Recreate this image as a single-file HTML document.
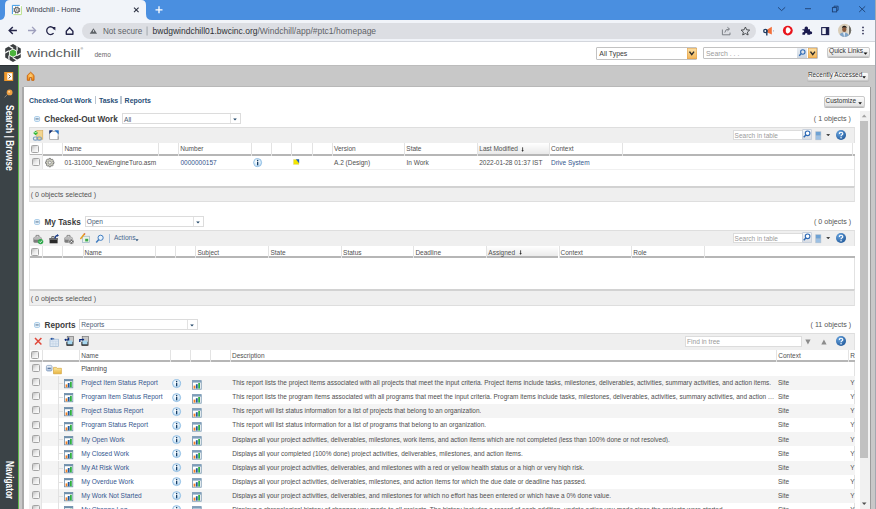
<!DOCTYPE html>
<html><head><meta charset="utf-8">
<style>
*{box-sizing:border-box}
html,body{margin:0;padding:0;width:876px;height:509px;overflow:hidden;background:#fff;font-family:"Liberation Sans",sans-serif;}
.a{position:absolute}
.t{position:absolute;white-space:nowrap;line-height:1}
svg{position:absolute;overflow:visible}
#toolbar{left:0;top:20px;width:876px;height:21px;background:#f1f4f9}
#tbline{left:0;top:41px;width:876px;height:1px;background:#d3d6dc}
#pill{left:82px;top:23px;width:674px;height:16px;background:#dcdee3;border-radius:8px}
#hdr{left:0;top:42px;width:876px;height:23px;background:#fff}
#side{left:0;top:65px;width:18px;height:444px;background:#3b4347}
#green{left:18px;top:65px;width:1px;height:444px;background:#5db84a}
#gray{left:19px;top:65px;width:856px;height:444px;background:#c8c8c8}
#rstrip{left:875px;top:0;width:1px;height:509px;background:#a3a8b0}
#panel{left:24px;top:87px;width:846px;height:422px;background:#fff}
.btn{position:absolute;border:1px solid #c9c9c9;border-radius:2px;background:linear-gradient(#fdfdfd,#e2e2e2);box-shadow:0 1px 0 #b9b9b9}
.sel{position:absolute;border:1px solid #c9c9c9;background:#fff}
.tbl{position:absolute;left:29px;width:826px;background:#fff}
</style></head>
<body>
<!-- tab bar -->
<svg width="876" height="20" style="left:0;top:0">
<rect x="0" y="0" width="876" height="20" fill="#4a8fe0"/>
<path d="M-1,20 Q5,20 5,14 L5,5 Q5,0 10,0 L141,0 Q146,0 146,5 L146,14 Q146,20 152,20 Z" fill="#f1f4f9"/>
<!-- favicon -->
<rect x="12" y="5" width="9.8" height="10" fill="#fff"/>
<path d="M12.4,14.2 L12.4,5.4 L19.8,5.4" stroke="#3d9be6" stroke-width="1" fill="none"/>
<path d="M13.4,14.6 L21.4,14.6 L21.4,6.2" stroke="#b8e08a" stroke-width="1" fill="none"/>
<path d="M19.49,10.25 L20.31,10.80 L19.84,11.92 L18.88,11.72 L18.52,12.08 L18.72,13.04 L17.60,13.51 L17.05,12.69 L16.55,12.69 L16.00,13.51 L14.88,13.04 L15.08,12.08 L14.72,11.72 L13.76,11.92 L13.29,10.80 L14.11,10.25 L14.11,9.75 L13.29,9.20 L13.76,8.08 L14.72,8.28 L15.08,7.92 L14.88,6.96 L16.00,6.49 L16.55,7.31 L17.05,7.31 L17.60,6.49 L18.72,6.96 L18.52,7.92 L18.88,8.28 L19.84,8.08 L20.31,9.20 L19.49,9.75 Z" fill="#6b6b6b"/>
<circle cx="16.8" cy="10.0" r="1.7" fill="#fff"/>
<circle cx="16.8" cy="10.0" r="0.8" fill="#555"/>
<!-- close x -->
<path d="M134,7.6 L138.6,12.2 M138.6,7.6 L134,12.2" stroke="#2d3142" stroke-width="1.1"/>
<!-- plus -->
<path d="M159,6.3 L159,13.3 M155.5,9.8 L162.5,9.8" stroke="#fff" stroke-width="1.3"/>
<!-- window controls -->
<path d="M778,7.3 L781.6,10.6 L785.2,7.3" stroke="#1d3f72" stroke-width="0.9" fill="none"/>
<path d="M805,8.7 L811,8.7" stroke="#1d3f72" stroke-width="0.9"/>
<rect x="832.4" y="7.6" width="4.3" height="4.3" fill="none" stroke="#1d3f72" stroke-width="0.9"/>
<path d="M834,7.6 L834,6.2 L838.1,6.2 L838.1,10.3 L836.7,10.3" fill="none" stroke="#1d3f72" stroke-width="0.9"/>
<path d="M859.2,6.3 L865.2,12 M865.2,6.3 L859.2,12" stroke="#1d3f72" stroke-width="0.9"/>
</svg>
<div class="t" style="left:26px;top:5.6px;font-size:8px;color:#333847;transform-origin:0 0;transform:scaleX(0.9)">Windchill - Home</div>
<div class="a" id="toolbar"></div>
<div class="a" id="tbline"></div>
<div class="a" id="pill"></div>
<svg width="876" height="22" style="left:0;top:20px">
<!-- back -->
<path d="M9.4,10.5 L16.9,10.5 M12.8,6.9 L9.2,10.5 L12.8,14.1" stroke="#25264a" stroke-width="1.45" fill="none"/>
<path d="M28,10.5 L35.5,10.5 M32.1,6.9 L35.6,10.5 L32.1,14.1" stroke="#9e9fbd" stroke-width="1.3" fill="none"/>
<!-- reload -->
<path d="M54.3,9.4 A3.9,3.9 0 1 0 53.6,13.2" stroke="#25264a" stroke-width="1.3" fill="none"/>
<path d="M51.6,6.9 L55.4,6.9 L55.4,10.4 Z" fill="#25264a"/>
<!-- home -->
<path d="M66.3,11.3 L69.6,7.6 L72.9,11.3 L72.9,14.2 L66.3,14.2 Z" stroke="#25264a" stroke-width="1.4" fill="none" stroke-linejoin="round"/>
<!-- warning -->
<path d="M93.4,8.2 L97.1,13.8 L89.7,13.8 Z" fill="#5f6368"/>
<rect x="93" y="10" width="0.8" height="2" fill="#dcdee3"/>
<!-- separator -->
<rect x="146.6" y="6.5" width="0.9" height="9" fill="#9aa0a6"/>
<!-- share -->
<path d="M722.4,9.5 L722.4,14.8 L730,14.8 L730,12.6" stroke="#70757a" stroke-width="0.9" fill="none"/>
<path d="M724.8,12.6 Q725.2,9 729,9 M727.4,7.3 L729.6,9 L727.4,10.9" stroke="#70757a" stroke-width="0.9" fill="none"/>
<!-- star -->
<path d="M745.4,7 L746.7,9.8 L749.7,10.1 L747.4,12.1 L748.1,15 L745.4,13.5 L742.7,15 L743.4,12.1 L741.1,10.1 L744.1,9.8 Z" stroke="#3c4043" stroke-width="0.9" fill="none" stroke-linejoin="round"/>
<!-- megaphone -->
<path d="M767.3,9.4 L771.8,6.8 L771.8,14.6 L767.3,12.6 Z" fill="#f26f3a"/>
<circle cx="765.4" cy="11" r="1.7" fill="none" stroke="#1f3a5f" stroke-width="1.3"/>
<path d="M766.8,10 L766.8,15.4" stroke="#1f3a5f" stroke-width="1.4"/>
<rect x="773" y="10.4" width="1" height="1" fill="#9aa6b2"/>
<!-- red circle -->
<circle cx="787.8" cy="10.6" r="4.9" fill="#e8141c"/>
<path d="M785.8,9.2 Q785.8,8.3 786.5,8.3 L786.6,7.6 Q787.6,7 788.5,7.6 L789.2,7.8 Q790,8 789.9,9 L790.6,9.6 Q791,10.4 790.3,11.2 L789.5,12.6 Q788.4,13.8 787,13.2 Q785.8,12.6 785.8,11.4 Z" fill="#fff"/>
<!-- puzzle -->
<path d="M802.4,9.2 L804.6,9.2 Q804.3,6.6 806.3,6.6 Q808.3,6.6 808,9.2 L810,9.2 L810,11.2 Q812.2,10.9 812.2,12.7 Q812.2,14.5 810,14.2 L810,14.8 L807.4,14.8 Q807.7,13 806.2,13 Q804.7,13 805,14.8 L802.4,14.8 L802.4,12.4 Q804.2,12.6 804.2,11.3 Q804.2,10 802.4,10.3 Z" fill="#1a1a4e"/>
<!-- sidebar icon -->
<rect x="821.7" y="7.6" width="7" height="7" fill="none" stroke="#1c1f4d" stroke-width="1.1"/>
<rect x="825.8" y="7.6" width="2.9" height="7" fill="#1c1f4d"/>
<!-- avatar -->
<defs><clipPath id="av"><circle cx="844.6" cy="10.3" r="6.6"/></clipPath></defs>
<g clip-path="url(#av)">
<rect x="837" y="3" width="15" height="15" fill="#d9cdb8"/>
<rect x="848.5" y="3" width="4" height="15" fill="#6f6f6a"/>
<rect x="847.6" y="3" width="1.3" height="15" fill="#ece6dc"/>
<path d="M838.5,17.5 Q839,12.6 843.8,12.4 Q848.8,12.6 850.6,17.5 Z" fill="#7ea3c8"/>
<path d="M843,12.6 L844.4,17.5 L845.2,12.6 Z" fill="#e6eef6"/>
<ellipse cx="844.3" cy="9.4" rx="2.1" ry="2.6" fill="#8a5a3c"/>
<path d="M842,8.6 Q842,5.6 844.4,5.8 Q846.8,5.8 846.6,8.4 Q845.6,7 844.2,7.2 Q842.8,7.2 842,8.6 Z" fill="#1e1a18"/>
</g>
<!-- kebab -->
<circle cx="863" cy="7.4" r="0.85" fill="#25264a"/>
<circle cx="863" cy="10.5" r="0.85" fill="#25264a"/>
<circle cx="863" cy="13.6" r="0.85" fill="#25264a"/>
</svg>
<div class="t" style="left:102.9px;top:27px;font-size:9px;color:#5f6368;transform-origin:0 0;transform:scaleX(0.9)">Not secure</div>
<div class="t" style="left:152.6px;top:27.1px;font-size:8.5px;color:#303236">bwdgwindchill01.bwcinc.org<span style="color:#5f6368">/Windchill/app/#ptc1/homepage</span></div>

<!-- windchill header -->
<div class="a" id="hdr"></div>
<svg width="26" height="24" style="left:0;top:42px" viewBox="0 42 26 24">
<defs><clipPath id="lc"><path d="M13.00,44.10 L20.79,48.60 L20.79,57.60 L13.00,62.10 L5.21,57.60 L5.21,48.60 Z"/></clipPath></defs>
<path d="M13.00,44.10 L20.79,48.60 L20.79,57.60 L13.00,62.10 L5.21,57.60 L5.21,48.60 Z" fill="#3b3f41"/>
<g clip-path="url(#lc)"><path d="M17.07,50.75 L17.07,40.75 M17.07,55.45 L25.73,50.45 M13.00,57.80 L21.66,62.80 M8.93,55.45 L8.93,65.45 M8.93,50.75 L0.27,55.75 M13.00,48.40 L4.34,43.40" stroke="#fff" stroke-width="1.25"/></g>
<path d="M13.00,48.40 L17.07,50.75 L17.07,55.45 L13.00,57.80 L8.93,55.45 L8.93,50.75 Z" fill="#fff"/>
<path d="M13.00,49.40 L16.20,51.25 L16.20,54.95 L13.00,56.80 L9.80,54.95 L9.80,51.25 Z" fill="#4cb33d"/>
</svg>
<div class="t" style="left:27px;top:48.3px;font-size:11.8px;color:#575b5d;transform-origin:0 0;transform:scaleX(1.19)">windchill</div>
<div class="t" style="left:80.6px;top:48px;font-size:3.5px;color:#555">&#174;</div>
<div class="t" style="left:94.5px;top:52px;font-size:6.5px;color:#666">demo</div>
<div class="sel" style="left:596px;top:47px;width:101px;height:12.5px;border-color:#c2c2c2;border-radius:1px"></div>
<div class="t" style="left:599.3px;top:50.8px;font-size:6.95px;color:#3a3a3a">All Types</div>
<div class="a" style="left:687px;top:48px;width:9.5px;height:10.5px;background:linear-gradient(#fbe2a8,#f3b454);box-shadow:inset 0 0 0 0.5px #e0a050"></div>
<svg width="10" height="10" style="left:687px;top:48px"><path d="M2.5,3.6 L4.75,6.6 L7,3.6" stroke="#2a2a2a" stroke-width="1.4" fill="none"/></svg>
<div class="sel" style="left:703px;top:47px;width:114.5px;height:12.3px;border-color:#c2c2c2;border-radius:1px"></div>
<div class="t" style="left:706px;top:50.8px;font-size:6.9px;color:#9b9b9b">Search . . .</div>
<div class="a" style="left:797.4px;top:48px;width:10px;height:10.3px;background:linear-gradient(#e9eef4,#cdd6e0)"></div>
<svg width="10" height="10" style="left:797.4px;top:48px"><circle cx="5.8" cy="4" r="2.2" fill="none" stroke="#2f6ab5" stroke-width="1.1"/><path d="M4.2,5.6 L2.2,7.8" stroke="#2f6ab5" stroke-width="1.4"/></svg>
<div class="a" style="left:807.5px;top:48px;width:9.5px;height:10.3px;background:linear-gradient(#fbe2a8,#f3b454);box-shadow:inset 0 0 0 0.5px #e0a050"></div>
<svg width="10" height="10" style="left:807.5px;top:48px"><path d="M2.5,3.6 L4.75,6.6 L7,3.6" stroke="#2a2a2a" stroke-width="1.4" fill="none"/></svg>
<div class="btn" style="left:827px;top:47px;width:43px;height:10px"></div>
<div class="t" style="left:829px;top:48.4px;font-size:6.6px;color:#333">Quick Links</div>
<svg width="6" height="4" style="left:862.6px;top:52px"><path d="M0.5,0.5 L4.5,0.5 L2.5,2.8 Z" fill="#111"/></svg>


<div class="a" id="gray"></div>
<div class="a" id="side"></div>
<div class="a" style="left:0;top:65px;width:18px;height:1px;background:#2c3235"></div>
<div class="a" style="left:19px;top:65px;width:856px;height:1px;background:#bcbcbc"></div>
<div class="a" style="left:24px;top:86px;width:846px;height:1px;background:#b8b8b8"></div>
<div class="a" id="green"></div>
<div class="a" style="left:22px;top:87px;width:2px;height:422px;background:#a9a9a9"></div>
<div class="a" id="panel"></div>
<div class="a" style="left:870px;top:87px;width:1px;height:422px;background:#9c9c9c"></div>
<div class="a" id="rstrip"></div>


<svg width="18" height="40" style="left:0;top:65px">
<rect x="4.2" y="7" width="9" height="9" fill="#f19a2c"/>
<rect x="7.3" y="8.2" width="4.9" height="6.6" fill="#fff"/>
<path d="M8.6,9.6 L10.6,11.5 L8.6,13.4" stroke="#7a4a10" stroke-width="0.9" fill="none"/>
<circle cx="9.6" cy="27.4" r="2.9" fill="#f0a040"/>
<circle cx="9.1" cy="26.8" r="1" fill="#ffd7a0"/>
<path d="M7.4,29.4 L4.6,32.4" stroke="#9a8a7a" stroke-width="0.9"/>
</svg>
<div class="t" style="left:14px;top:104.9px;font-size:10px;font-weight:bold;color:#fff;transform-origin:0 0;transform:rotate(90deg) scaleX(0.845)">Search | Browse</div>
<div class="t" style="left:14px;top:460.9px;font-size:10px;font-weight:bold;color:#fff;transform-origin:0 0;transform:rotate(90deg) scaleX(0.83)">Navigator</div>


<svg width="12" height="12" style="left:25px;top:70px">
<defs><radialGradient id="hm" cx="0.5" cy="0.45" r="0.6"><stop offset="0" stop-color="#ffd27a"/><stop offset="1" stop-color="#f08a10"/></radialGradient></defs>
<path d="M2.3,5.4 L5.65,2.2 L9,5.4 L9,10.3 L6.7,10.3 L6.7,7.6 L4.6,7.6 L4.6,10.3 L2.3,10.3 Z" fill="url(#hm)" stroke="#c8620a" stroke-width="0.9" stroke-linejoin="round"/>
</svg>
<div class="btn" style="left:806.5px;top:71.5px;width:62.5px;height:9.5px"></div>
<div class="t" style="left:807.9px;top:72px;font-size:6.45px;color:#333">Recently Accessed</div>
<svg width="6" height="4" style="left:862px;top:75.8px"><path d="M0.3,0.3 L3.9,0.3 L2.1,2.4 Z" fill="#111"/></svg>
<div class="t" style="left:29px;top:96.5px;font-size:6.98px;font-weight:bold;color:#2a4f78">Checked-Out Work</div>
<div class="a" style="left:94.6px;top:96px;width:1.6px;height:7.6px;background:#bac5d1"></div>
<div class="t" style="left:99px;top:96.5px;font-size:6.98px;font-weight:bold;color:#2a4f78">Tasks</div>
<div class="a" style="left:120.2px;top:96px;width:1.6px;height:7.6px;background:#bac5d1"></div>
<div class="t" style="left:124.6px;top:96.5px;font-size:6.98px;font-weight:bold;color:#2a4f78">Reports</div>
<div class="btn" style="left:824px;top:96px;width:41px;height:10.5px"></div>
<div class="t" style="left:825.6px;top:97.6px;font-size:6.45px;color:#333">Customize</div>
<svg width="6" height="4" style="left:858.2px;top:101.5px"><path d="M0.3,0.3 L3.9,0.3 L2.1,2.4 Z" fill="#111"/></svg>


<div class="a" style="left:860px;top:111px;width:10px;height:398px;background:#f1f1f1"></div>
<div class="a" style="left:860px;top:121px;width:8px;height:336.6px;background:#c1c1c1"></div>
<svg width="10" height="10" style="left:860px;top:111px"><path d="M1.8,6.2 L4.2,3.6 L6.6,6.2 Z" fill="#a3a3a3"/></svg>
<svg width="10" height="10" style="left:860px;top:499px"><path d="M1.9,3.4 L4.2,5.9 L6.5,3.4 Z" fill="#505050"/></svg>

<svg width="8" height="8" style="left:33.6px;top:116.4px"><rect x="0.6" y="0.6" width="5" height="4.8" rx="1.1" fill="#e9f3fb" stroke="#9cc4e4" stroke-width="0.9"/><rect x="1.5" y="2.5" width="3.2" height="0.9" fill="#3f5f80"/></svg>
<div class="t" style="left:44.3px;top:115.6px;font-size:8.2px;font-weight:bold;color:#3c3c3c">Checked-Out Work</div>
<div class="sel" style="left:122px;top:113.3px;width:119.4px;height:11.2px;border-color:#dcdcdc"></div>
<div class="a" style="left:230.2px;top:114.3px;width:1px;height:9.2px;background:#e2e2e2"></div>
<svg width="6" height="4" style="left:233.0px;top:118.0px"><path d="M0.2,0.4 L3.8,0.4 L2,2.5 Z" fill="#1f4466"/></svg>
<div class="t" style="left:124px;top:116.5px;font-size:6.6px;color:#4a5a74">All</div>
<div class="t" style="left:813.8px;top:116.2px;font-size:7.1px;color:#555">( 1 objects )</div>
<div class="a" style="left:29px;top:127px;width:826px;height:15.699999999999989px;background:#efefef;border-top:1px solid #dedede;border-left:1px solid #e2e2e2;border-right:1px solid #e2e2e2"></div>
<div class="a" style="left:29px;top:142.7px;width:826px;height:43.400000000000006px;background:#fff;border-left:1px solid #e2e2e2;border-right:1px solid #e2e2e2"></div>
<div class="a" style="left:29px;top:186.1px;width:826px;height:15.900000000000006px;background:#efefef;border-top:2px solid #d2d2d2;border-bottom:1px solid #dedede;border-left:1px solid #e2e2e2;border-right:1px solid #e2e2e2"></div>
<div class="t" style="left:30.7px;top:192.4px;font-size:7.1px;color:#555">( 0 objects selected )</div>
<div class="sel" style="left:732.6px;top:129.7px;width:79px;height:10.7px;border-color:#dcdcdc"></div>
<div class="t" style="left:734.6px;top:132.7px;font-size:6.5px;color:#9a9a9a">Search in table</div>
<div class="a" style="left:801.8px;top:129.1px;width:9.8px;height:11.3px;background:linear-gradient(#f4f6f9,#d9dde3);border:1px solid #c9d1dd;border-radius:1px"></div>
<svg width="10" height="11" style="left:801.8px;top:129.1px"><circle cx="5.6" cy="4.3" r="2.3" fill="#fff" stroke="#2f6ab5" stroke-width="1.1"/><path d="M3.9,6 L1.7,8.3" stroke="#2f6ab5" stroke-width="1.4"/></svg>
<svg width="8" height="11" style="left:814.6px;top:130.7px"><rect x="0.3" y="0.3" width="5.9" height="8.8" fill="#b8c4d0"/><rect x="0.9" y="0.9" width="4.7" height="3.6" fill="#6ea2d4"/><rect x="0.9" y="5.1" width="4.7" height="3.4" fill="#9cc0e4"/></svg>
<svg width="6" height="4" style="left:825.8px;top:134.29999999999998px"><path d="M0.2,0.3 L4.2,0.3 L2.2,2 Z" fill="#111"/></svg>
<svg width="11" height="11" style="left:835.8px;top:130.39999999999998px"><defs><radialGradient id="hg" cx="0.35" cy="0.3" r="0.8"><stop offset="0" stop-color="#6aa6e0"/><stop offset="1" stop-color="#1d5597"/></radialGradient></defs><circle cx="5" cy="5" r="5" fill="url(#hg)"/><path d="M3.3,3.9 Q3.3,2.2 5,2.2 Q6.8,2.2 6.8,3.7 Q6.8,4.6 5.7,5.1 Q5.05,5.4 5.05,6.3" stroke="#fff" stroke-width="1.15" fill="none"/><circle cx="5.05" cy="7.7" r="0.7" fill="#fff"/></svg>
<svg width="12" height="12" style="left:33px;top:129.5px">
<rect x="3.8" y="0.6" width="6" height="8.6" fill="#f3d58e" stroke="#d1a652" stroke-width="0.6"/>
<path d="M2.6,0.7 L5,3 L2.6,5.3 L0.2,3 Z" fill="#2eb82e"/>
<path d="M1.5,2.6 L3.7,2.6" stroke="#fff" stroke-width="0.7"/>
<rect x="0.4" y="7" width="4.2" height="3.2" rx="1.6" fill="none" stroke="#7e9fc0" stroke-width="1.2"/>
<rect x="4.2" y="7" width="4.2" height="3.2" rx="1.6" fill="none" stroke="#7e9fc0" stroke-width="1.2"/>
</svg>
<svg width="12" height="12" style="left:48.5px;top:129.8px">
<rect x="0.7" y="1.6" width="8.4" height="8" fill="#fff" stroke="#9a9a9a" stroke-width="0.7"/>
<path d="M0.3,0.3 L4,0.3 L0.3,4 Z" fill="#0f2a6e"/>
<path d="M9.7,0.2 L5.4,0.2 L9.7,4.6 Z" fill="#2a72c4"/>
<path d="M9.2,9.6 L9.2,6.4" stroke="#777" stroke-width="0.6"/>
</svg>
<div class="a" style="left:29px;top:142.7px;width:826px;height:13.2px;background:#fff"></div>
<div class="a" style="left:29.4px;top:142.7px;width:1px;height:13.2px;background:#e3e3e3"></div>
<div class="a" style="left:30.4px;top:153.89999999999998px;width:12.0px;height:2px;background:#b6b6b6"></div>
<div class="a" style="left:42.4px;top:142.7px;width:1px;height:13.2px;background:#e3e3e3"></div>
<div class="a" style="left:43.4px;top:153.89999999999998px;width:19.0px;height:2px;background:#b6b6b6"></div>
<div class="a" style="left:62.4px;top:142.7px;width:1px;height:13.2px;background:#e3e3e3"></div>
<div class="a" style="left:63.4px;top:153.89999999999998px;width:94.9px;height:2px;background:#b6b6b6"></div>
<div class="t" style="left:64.4px;top:146.29999999999998px;font-size:6.5px;color:#505050">Name</div>
<div class="a" style="left:158.3px;top:142.7px;width:1px;height:13.2px;background:#e3e3e3"></div>
<div class="a" style="left:159.3px;top:153.89999999999998px;width:19.0px;height:2px;background:#b6b6b6"></div>
<div class="a" style="left:178.3px;top:142.7px;width:1px;height:13.2px;background:#e3e3e3"></div>
<div class="a" style="left:179.3px;top:153.89999999999998px;width:71.69999999999999px;height:2px;background:#b6b6b6"></div>
<div class="t" style="left:180.3px;top:146.29999999999998px;font-size:6.5px;color:#505050">Number</div>
<div class="a" style="left:251px;top:142.7px;width:1px;height:13.2px;background:#e3e3e3"></div>
<div class="a" style="left:252px;top:153.89999999999998px;width:19px;height:2px;background:#b6b6b6"></div>
<div class="a" style="left:271px;top:142.7px;width:1px;height:13.2px;background:#e3e3e3"></div>
<div class="a" style="left:272px;top:153.89999999999998px;width:19px;height:2px;background:#b6b6b6"></div>
<div class="a" style="left:291px;top:142.7px;width:1px;height:13.2px;background:#e3e3e3"></div>
<div class="a" style="left:292px;top:153.89999999999998px;width:19.600000000000023px;height:2px;background:#b6b6b6"></div>
<div class="a" style="left:311.6px;top:142.7px;width:1px;height:13.2px;background:#e3e3e3"></div>
<div class="a" style="left:312.6px;top:153.89999999999998px;width:19.399999999999977px;height:2px;background:#b6b6b6"></div>
<div class="a" style="left:332px;top:142.7px;width:1px;height:13.2px;background:#e3e3e3"></div>
<div class="a" style="left:333px;top:153.89999999999998px;width:71.30000000000001px;height:2px;background:#b6b6b6"></div>
<div class="t" style="left:334px;top:146.29999999999998px;font-size:6.5px;color:#505050">Version</div>
<div class="a" style="left:404.3px;top:142.7px;width:1px;height:13.2px;background:#e3e3e3"></div>
<div class="a" style="left:405.3px;top:153.89999999999998px;width:72.0px;height:2px;background:#b6b6b6"></div>
<div class="t" style="left:406.3px;top:146.29999999999998px;font-size:6.5px;color:#505050">State</div>
<div class="a" style="left:478.3px;top:142.7px;width:70.80000000000001px;height:11.7px;background:linear-gradient(#fff,#e9e9e9)"></div>
<div class="a" style="left:477.3px;top:142.7px;width:1px;height:13.2px;background:#e3e3e3"></div>
<div class="a" style="left:478.3px;top:153.89999999999998px;width:70.80000000000001px;height:2px;background:#b6b6b6"></div>
<div class="t" style="left:479.3px;top:146.29999999999998px;font-size:6.5px;color:#505050">Last Modified</div>
<div class="a" style="left:549.1px;top:142.7px;width:1px;height:13.2px;background:#e3e3e3"></div>
<div class="a" style="left:550.1px;top:153.89999999999998px;width:71.89999999999998px;height:2px;background:#b6b6b6"></div>
<div class="t" style="left:551.1px;top:146.29999999999998px;font-size:6.5px;color:#505050">Context</div>
<div class="a" style="left:622px;top:142.7px;width:1px;height:13.2px;background:#e3e3e3"></div>
<div class="a" style="left:623px;top:153.89999999999998px;width:229.29999999999995px;height:2px;background:#b6b6b6"></div>
<div class="a" style="left:852.3px;top:142.7px;width:1px;height:13.2px;background:#e3e3e3"></div>
<div class="a" style="left:853.3px;top:153.89999999999998px;width:1.3000000000000682px;height:2px;background:#b6b6b6"></div>
<svg width="4" height="6" style="left:521.4px;top:146.8px"><path d="M1.6,0.3 L1.6,4" stroke="#222" stroke-width="0.8"/><path d="M0.4,3.2 L2.8,3.2 L1.6,4.8 Z" fill="#222"/></svg>
<div class="a" style="left:31.3px;top:144.6px;width:8px;height:8px;border:1px solid #a4a4a4;border-radius:1.5px;background:linear-gradient(135deg,#bdbdbd 0%,#e9e9e9 45%,#fff 100%)"></div>
<div class="a" style="left:29.4px;top:155.3px;width:13px;height:13.5px;background:#f4f4f4"></div>
<div class="a" style="left:42.4px;top:155.3px;width:1px;height:13.5px;background:#e6e6e6"></div>
<div class="a" style="left:29.4px;top:168.8px;width:825px;height:1px;background:#f0f0f0"></div>
<div class="a" style="left:32.1px;top:158px;width:8px;height:8px;border:1px solid #a4a4a4;border-radius:1.5px;background:linear-gradient(135deg,#bdbdbd 0%,#e9e9e9 45%,#fff 100%)"></div>
<svg width="10" height="10" style="left:44.6px;top:158px">
<path d="M7.83,3.56 L9.01,3.75 L9.01,5.45 L7.83,5.64 L7.67,6.01 L8.38,6.98 L7.18,8.18 L6.21,7.47 L5.84,7.63 L5.65,8.81 L3.95,8.81 L3.76,7.63 L3.39,7.47 L2.42,8.18 L1.22,6.98 L1.93,6.01 L1.77,5.64 L0.59,5.45 L0.59,3.75 L1.77,3.56 L1.93,3.19 L1.22,2.22 L2.42,1.02 L3.39,1.73 L3.76,1.57 L3.95,0.39 L5.65,0.39 L5.84,1.57 L6.21,1.73 L7.18,1.02 L8.38,2.22 L7.67,3.19 Z" fill="#d2d2c4" stroke="#5e5e5e" stroke-width="0.7" stroke-linejoin="round"/>
<circle cx="4.8" cy="4.6" r="1.5" fill="#f4f4f0" stroke="#6a6a6a" stroke-width="0.6"/>
</svg>
<div class="t" style="left:64.6px;top:159.7px;font-size:6.5px;color:#4e4e4e">01-31000_NewEngineTuro.asm</div>
<div class="t" style="left:180.5px;top:159.7px;font-size:6.5px;color:#34568e">0000000157</div>
<svg width="10" height="10" style="left:253px;top:157.8px"><defs><radialGradient id="ig" cx="0.4" cy="0.35" r="0.7"><stop offset="0" stop-color="#ffffff"/><stop offset="1" stop-color="#bcdcf4"/></radialGradient></defs><circle cx="4.6" cy="4.6" r="4" fill="url(#ig)" stroke="#7fb4e0" stroke-width="0.8"/><rect x="4" y="3.8" width="1.3" height="3.5" fill="#173e66"/><circle cx="4.65" cy="2.6" r="0.75" fill="#173e66"/></svg>
<svg width="8" height="8" style="left:293px;top:158.8px"><rect x="0.3" y="0.3" width="5.7" height="5.3" fill="#f2e400" stroke="#d8d8e8" stroke-width="0.3"/><path d="M2.8,0.2 L6.1,0.2 L6.1,4.2 Z" fill="#2064c0"/></svg>
<div class="t" style="left:334px;top:159.7px;font-size:6.5px;color:#4e4e4e">A.2 (Design)</div>
<div class="t" style="left:406.5px;top:159.7px;font-size:6.5px;color:#4e4e4e">In Work</div>
<div class="t" style="left:479.2px;top:159.7px;font-size:6.5px;color:#4e4e4e">2022-01-28 01:37 IST</div>
<div class="t" style="left:551px;top:159.7px;font-size:6.5px;color:#34568e">Drive System</div>
<svg width="8" height="8" style="left:33.6px;top:219.4px"><rect x="0.6" y="0.6" width="5" height="4.8" rx="1.1" fill="#e9f3fb" stroke="#9cc4e4" stroke-width="0.9"/><rect x="1.5" y="2.5" width="3.2" height="0.9" fill="#3f5f80"/></svg>
<div class="t" style="left:44.5px;top:218.6px;font-size:8.2px;font-weight:bold;color:#3c3c3c">My Tasks</div>
<div class="sel" style="left:84.8px;top:216.2px;width:119.3px;height:11.2px;border-color:#dcdcdc"></div>
<div class="a" style="left:193px;top:217.2px;width:1px;height:9.2px;background:#e2e2e2"></div>
<svg width="6" height="4" style="left:195.8px;top:220.89999999999998px"><path d="M0.2,0.4 L3.8,0.4 L2,2.5 Z" fill="#1f4466"/></svg>
<div class="t" style="left:86.8px;top:219.39999999999998px;font-size:6.6px;color:#4a5a74">Open</div>
<div class="t" style="left:814px;top:219.2px;font-size:7.1px;color:#555">( 0 objects )</div>
<div class="a" style="left:29px;top:230.2px;width:826px;height:16.0px;background:#efefef;border-top:1px solid #dedede;border-left:1px solid #e2e2e2;border-right:1px solid #e2e2e2"></div>
<div class="a" style="left:29px;top:246.2px;width:826px;height:43.0px;background:#fff;border-left:1px solid #e2e2e2;border-right:1px solid #e2e2e2"></div>
<div class="a" style="left:29px;top:289.2px;width:826px;height:16.400000000000034px;background:#efefef;border-top:2px solid #d2d2d2;border-bottom:1px solid #dedede;border-left:1px solid #e2e2e2;border-right:1px solid #e2e2e2"></div>
<div class="t" style="left:30.7px;top:295.5px;font-size:7.1px;color:#555">( 0 objects selected )</div>
<div class="sel" style="left:732.6px;top:232.7px;width:79px;height:10.7px;border-color:#dcdcdc"></div>
<div class="t" style="left:734.6px;top:235.7px;font-size:6.5px;color:#9a9a9a">Search in table</div>
<div class="a" style="left:801.8px;top:232.1px;width:9.8px;height:11.3px;background:linear-gradient(#f4f6f9,#d9dde3);border:1px solid #c9d1dd;border-radius:1px"></div>
<svg width="10" height="11" style="left:801.8px;top:232.1px"><circle cx="5.6" cy="4.3" r="2.3" fill="#fff" stroke="#2f6ab5" stroke-width="1.1"/><path d="M3.9,6 L1.7,8.3" stroke="#2f6ab5" stroke-width="1.4"/></svg>
<svg width="8" height="11" style="left:814.6px;top:233.7px"><rect x="0.3" y="0.3" width="5.9" height="8.8" fill="#b8c4d0"/><rect x="0.9" y="0.9" width="4.7" height="3.6" fill="#6ea2d4"/><rect x="0.9" y="5.1" width="4.7" height="3.4" fill="#9cc0e4"/></svg>
<svg width="6" height="4" style="left:825.8px;top:237.29999999999998px"><path d="M0.2,0.3 L4.2,0.3 L2.2,2 Z" fill="#111"/></svg>
<svg width="11" height="11" style="left:835.8px;top:233.39999999999998px"><defs><radialGradient id="hg" cx="0.35" cy="0.3" r="0.8"><stop offset="0" stop-color="#6aa6e0"/><stop offset="1" stop-color="#1d5597"/></radialGradient></defs><circle cx="5" cy="5" r="5" fill="url(#hg)"/><path d="M3.3,3.9 Q3.3,2.2 5,2.2 Q6.8,2.2 6.8,3.7 Q6.8,4.6 5.7,5.1 Q5.05,5.4 5.05,6.3" stroke="#fff" stroke-width="1.15" fill="none"/><circle cx="5.05" cy="7.7" r="0.7" fill="#fff"/></svg>
<svg width="12" height="12" style="left:32.8px;top:233.5px">
<rect x="0.4" y="2.8" width="8.2" height="6" rx="1.6" fill="#7c7c7c"/>
<rect x="0.8" y="3.1" width="7.4" height="2.6" rx="1.2" fill="#b9b9b9"/>
<path d="M3,3 L3,1.4 L6,1.4 L6,3" stroke="#777" stroke-width="0.8" fill="none"/>
<circle cx="7.6" cy="7.6" r="2.7" fill="#2ea84a"/>
<path d="M6.3,7.6 L7.3,8.6 L9,6.6" stroke="#fff" stroke-width="0.9" fill="none"/>
</svg>
<svg width="12" height="12" style="left:48.6px;top:233.5px">
<path d="M0.6,4 L8.6,4 L8.6,9.3 L0.6,9.3 Z" fill="#2a2a2a"/>
<path d="M0.6,4 L8.6,4 L8.6,6 L0.6,6 Z" fill="#6a6a6a"/>
<path d="M2.8,4 L2.8,2.6 L5.2,2.6 L5.2,4" stroke="#444" stroke-width="0.8" fill="none"/>
<path d="M6,4.6 Q6.2,1.6 8.8,1.4" stroke="#1a3d8a" stroke-width="1.2" fill="none"/>
<path d="M8,0 L10,1.4 L8,2.8 Z" fill="#1a3d8a"/>
</svg>
<svg width="12" height="12" style="left:63.8px;top:233.5px">
<rect x="0.4" y="2.8" width="8.2" height="6" rx="1.6" fill="#7c7c7c"/>
<rect x="0.8" y="3.1" width="7.4" height="2.6" rx="1.2" fill="#b9b9b9"/>
<path d="M3,3 L3,1.4 L6,1.4 L6,3" stroke="#777" stroke-width="0.8" fill="none"/>
<circle cx="7.4" cy="7.6" r="2.6" fill="#6a6a6a" stroke="#fff" stroke-width="0.5"/>
<path d="M6.4,6.6 L8.4,8.6 M8.4,6.6 L6.4,8.6" stroke="#fff" stroke-width="0.8"/>
</svg>
<svg width="12" height="12" style="left:79.5px;top:233.3px">
<rect x="2.6" y="3.2" width="6.8" height="6.4" fill="#e8f3e8" stroke="#8aa8c0" stroke-width="0.6"/>
<rect x="5.2" y="5.8" width="3" height="2.6" fill="#3ca84a"/>
<path d="M0.4,6 L4.6,0.8" stroke="#e6a020" stroke-width="1.4"/>
<path d="M3.6,0.4 L5.4,0.6 L5,1.8 Z" fill="#d03020"/>
</svg>
<svg width="11" height="11" style="left:95px;top:233.6px">
<circle cx="5.6" cy="3.8" r="2.6" fill="#eaf3fb" stroke="#3f7cc0" stroke-width="1"/>
<path d="M3.8,5.6 L1.2,8.4" stroke="#3f7cc0" stroke-width="1.5"/>
</svg>
<div class="a" style="left:109px;top:233.6px;width:0.9px;height:9px;background:#a9c1dc"></div>
<div class="t" style="left:113.9px;top:235.2px;font-size:6.6px;color:#4a6890">Actions</div>
<svg width="6" height="4" style="left:135.2px;top:238.6px"><path d="M0.3,0.3 L3.6,0.3 L1.95,2.2 Z" fill="#2a4f78"/></svg>

<div class="a" style="left:29px;top:246.2px;width:826px;height:12.1px;background:#fff"></div>
<div class="a" style="left:29.4px;top:246.2px;width:1px;height:12.1px;background:#e3e3e3"></div>
<div class="a" style="left:30.4px;top:256.3px;width:11.600000000000001px;height:2px;background:#b6b6b6"></div>
<div class="a" style="left:42px;top:246.2px;width:1px;height:12.1px;background:#e3e3e3"></div>
<div class="a" style="left:43px;top:256.3px;width:19px;height:2px;background:#b6b6b6"></div>
<div class="a" style="left:62px;top:246.2px;width:1px;height:12.1px;background:#e3e3e3"></div>
<div class="a" style="left:63px;top:256.3px;width:19.5px;height:2px;background:#b6b6b6"></div>
<div class="a" style="left:82.5px;top:246.2px;width:1px;height:12.1px;background:#e3e3e3"></div>
<div class="a" style="left:83.5px;top:256.3px;width:71.5px;height:2px;background:#b6b6b6"></div>
<div class="t" style="left:84.5px;top:249.79999999999998px;font-size:6.5px;color:#505050">Name</div>
<div class="a" style="left:155px;top:246.2px;width:1px;height:12.1px;background:#e3e3e3"></div>
<div class="a" style="left:156px;top:256.3px;width:19.400000000000006px;height:2px;background:#b6b6b6"></div>
<div class="a" style="left:175.4px;top:246.2px;width:1px;height:12.1px;background:#e3e3e3"></div>
<div class="a" style="left:176.4px;top:256.3px;width:19.0px;height:2px;background:#b6b6b6"></div>
<div class="a" style="left:195.4px;top:246.2px;width:1px;height:12.1px;background:#e3e3e3"></div>
<div class="a" style="left:196.4px;top:256.3px;width:71.99999999999997px;height:2px;background:#b6b6b6"></div>
<div class="t" style="left:197.4px;top:249.79999999999998px;font-size:6.5px;color:#505050">Subject</div>
<div class="a" style="left:268.4px;top:246.2px;width:1px;height:12.1px;background:#e3e3e3"></div>
<div class="a" style="left:269.4px;top:256.3px;width:71.70000000000005px;height:2px;background:#b6b6b6"></div>
<div class="t" style="left:270.4px;top:249.79999999999998px;font-size:6.5px;color:#505050">State</div>
<div class="a" style="left:341.1px;top:246.2px;width:1px;height:12.1px;background:#e3e3e3"></div>
<div class="a" style="left:342.1px;top:256.3px;width:71.29999999999995px;height:2px;background:#b6b6b6"></div>
<div class="t" style="left:343.1px;top:249.79999999999998px;font-size:6.5px;color:#505050">Status</div>
<div class="a" style="left:413.4px;top:246.2px;width:1px;height:12.1px;background:#e3e3e3"></div>
<div class="a" style="left:414.4px;top:256.3px;width:71.90000000000003px;height:2px;background:#b6b6b6"></div>
<div class="t" style="left:415.4px;top:249.79999999999998px;font-size:6.5px;color:#505050">Deadline</div>
<div class="a" style="left:487.3px;top:246.2px;width:71.19999999999999px;height:10.6px;background:linear-gradient(#fff,#e9e9e9)"></div>
<div class="a" style="left:486.3px;top:246.2px;width:1px;height:12.1px;background:#e3e3e3"></div>
<div class="a" style="left:487.3px;top:256.3px;width:71.19999999999999px;height:2px;background:#b6b6b6"></div>
<div class="t" style="left:488.3px;top:249.79999999999998px;font-size:6.5px;color:#505050">Assigned</div>
<div class="a" style="left:558.5px;top:246.2px;width:1px;height:12.1px;background:#e3e3e3"></div>
<div class="a" style="left:559.5px;top:256.3px;width:71.70000000000005px;height:2px;background:#b6b6b6"></div>
<div class="t" style="left:560.5px;top:249.79999999999998px;font-size:6.5px;color:#505050">Context</div>
<div class="a" style="left:631.2px;top:246.2px;width:1px;height:12.1px;background:#e3e3e3"></div>
<div class="a" style="left:632.2px;top:256.3px;width:71.39999999999998px;height:2px;background:#b6b6b6"></div>
<div class="t" style="left:633.2px;top:249.79999999999998px;font-size:6.5px;color:#505050">Role</div>
<div class="a" style="left:703.6px;top:246.2px;width:1px;height:12.1px;background:#e3e3e3"></div>
<div class="a" style="left:704.6px;top:256.3px;width:150.0px;height:2px;background:#b6b6b6"></div>
<svg width="4" height="6" style="left:518.6px;top:249.6px"><path d="M1.6,0.3 L1.6,4" stroke="#222" stroke-width="0.8"/><path d="M0.4,3.2 L2.8,3.2 L1.6,4.8 Z" fill="#222"/></svg>
<div class="a" style="left:31.2px;top:248.3px;width:8px;height:8px;border:1px solid #a4a4a4;border-radius:1.5px;background:linear-gradient(135deg,#bdbdbd 0%,#e9e9e9 45%,#fff 100%)"></div>
<svg width="8" height="8" style="left:33.6px;top:322.4px"><rect x="0.6" y="0.6" width="5" height="4.8" rx="1.1" fill="#e9f3fb" stroke="#9cc4e4" stroke-width="0.9"/><rect x="1.5" y="2.5" width="3.2" height="0.9" fill="#3f5f80"/></svg>
<div class="t" style="left:44.6px;top:321.6px;font-size:8.2px;font-weight:bold;color:#3c3c3c">Reports</div>
<div class="sel" style="left:79.3px;top:319.2px;width:119.2px;height:11.3px;border-color:#dcdcdc"></div>
<div class="a" style="left:187.3px;top:320.2px;width:1px;height:9.3px;background:#e2e2e2"></div>
<svg width="6" height="4" style="left:190.10000000000002px;top:323.9px"><path d="M0.2,0.4 L3.8,0.4 L2,2.5 Z" fill="#1f4466"/></svg>
<div class="t" style="left:81.3px;top:322.4px;font-size:6.6px;color:#4a5a74">Reports</div>
<div class="t" style="left:810.6px;top:322px;font-size:7.1px;color:#555">( 11 objects )</div>
<div class="a" style="left:29px;top:333.2px;width:826px;height:16.400000000000034px;background:#efefef;border-top:1px solid #dedede;border-left:1px solid #e2e2e2;border-right:1px solid #e2e2e2"></div>
<div class="a" style="left:29px;top:349.6px;width:826px;height:159.39999999999998px;background:#fff;border-left:1px solid #e2e2e2;border-right:1px solid #e2e2e2"></div>
<div class="sel" style="left:684.8px;top:335.6px;width:117.5px;height:11.7px;border-color:#dcdcdc"></div>
<div class="t" style="left:687px;top:339px;font-size:6.6px;color:#9a9a9a">Find in tree</div>
<svg width="7" height="7" style="left:805.4px;top:338.6px"><path d="M0.3,0.6 L5.6,0.6 L2.95,5.4 Z" fill="#8c8c8c"/></svg>
<svg width="7" height="7" style="left:820.6px;top:338.6px"><path d="M0.3,5.4 L5.6,5.4 L2.95,0.6 Z" fill="#8c8c8c"/></svg>
<svg width="11" height="11" style="left:836px;top:336.2px"><defs><radialGradient id="hg" cx="0.35" cy="0.3" r="0.8"><stop offset="0" stop-color="#6aa6e0"/><stop offset="1" stop-color="#1d5597"/></radialGradient></defs><circle cx="5" cy="5" r="5" fill="url(#hg)"/><path d="M3.3,3.9 Q3.3,2.2 5,2.2 Q6.8,2.2 6.8,3.7 Q6.8,4.6 5.7,5.1 Q5.05,5.4 5.05,6.3" stroke="#fff" stroke-width="1.15" fill="none"/><circle cx="5.05" cy="7.7" r="0.7" fill="#fff"/></svg>
<svg width="10" height="10" style="left:33.6px;top:336.8px"><path d="M1,1 L7.4,7.6 M7.4,1 L1,7.6" stroke="#e0483a" stroke-width="1.5"/></svg>
<svg width="11" height="11" style="left:49.2px;top:336.6px">
<rect x="1" y="2.2" width="8.6" height="7.2" fill="#dfe9f4" stroke="#9fb8d2" stroke-width="0.7"/>
<path d="M1,4.2 L9.6,4.2 M4,4.2 L4,9.4 M6.8,4.2 L6.8,9.4 M1,6.8 L9.6,6.8" stroke="#b9cde0" stroke-width="0.5"/>
<path d="M1.2,1.8 L3.2,0.4 L3.2,3.2 Z" fill="#1a4a9a"/>
<path d="M3,1.8 L5.2,1.8" stroke="#1a4a9a" stroke-width="0.9"/>
</svg>
<svg width="11" height="11" style="left:64.4px;top:336.4px">
<rect x="3.2" y="0.6" width="6.4" height="9" fill="#c8c8c8" stroke="#666" stroke-width="0.6"/>
<rect x="2.4" y="5.8" width="6.4" height="3.8" fill="#222"/>
<rect x="3.4" y="4.6" width="5" height="3.8" fill="#a8d8f0"/>
<path d="M4.6,1.6 L4.6,3.8 L1.2,3.8" stroke="#0a2a7a" stroke-width="1.3" fill="none"/>
<path d="M0.2,3.8 L2,2.4 L2,5.2 Z" fill="#0a2a7a"/>
</svg>
<svg width="11" height="11" style="left:79.2px;top:336.4px">
<rect x="3.2" y="0.6" width="6.4" height="9" fill="#c8c8c8" stroke="#666" stroke-width="0.6"/>
<rect x="2.4" y="5.8" width="6.4" height="3.8" fill="#222"/>
<rect x="3.4" y="4.6" width="5" height="3.8" fill="#a8d8f0"/>
<path d="M0.8,6 L0.8,3.6 L4.4,3.6" stroke="#0a2a7a" stroke-width="1.3" fill="none"/>
<path d="M5.4,3.6 L3.6,2.2 L3.6,5 Z" fill="#0a2a7a"/>
</svg>

<div class="a" style="left:29px;top:349.6px;width:826px;height:12.2px;background:#fff"></div>
<div class="a" style="left:29.4px;top:349.6px;width:1px;height:12.2px;background:#e3e3e3"></div>
<div class="a" style="left:30.4px;top:359.8px;width:12.0px;height:2px;background:#b6b6b6"></div>
<div class="a" style="left:42.4px;top:349.6px;width:1px;height:12.2px;background:#e3e3e3"></div>
<div class="a" style="left:43.4px;top:359.8px;width:35.800000000000004px;height:2px;background:#b6b6b6"></div>
<div class="a" style="left:79.2px;top:349.6px;width:1px;height:12.2px;background:#e3e3e3"></div>
<div class="a" style="left:80.2px;top:359.8px;width:89.8px;height:2px;background:#b6b6b6"></div>
<div class="t" style="left:81.2px;top:353.20000000000005px;font-size:6.5px;color:#505050">Name</div>
<div class="a" style="left:170px;top:349.6px;width:1px;height:12.2px;background:#e3e3e3"></div>
<div class="a" style="left:171px;top:359.8px;width:18.599999999999994px;height:2px;background:#b6b6b6"></div>
<div class="a" style="left:189.6px;top:349.6px;width:1px;height:12.2px;background:#e3e3e3"></div>
<div class="a" style="left:190.6px;top:359.8px;width:19.200000000000017px;height:2px;background:#b6b6b6"></div>
<div class="a" style="left:209.8px;top:349.6px;width:1px;height:12.2px;background:#e3e3e3"></div>
<div class="a" style="left:210.8px;top:359.8px;width:19.19999999999999px;height:2px;background:#b6b6b6"></div>
<div class="a" style="left:230px;top:349.6px;width:1px;height:12.2px;background:#e3e3e3"></div>
<div class="a" style="left:231px;top:359.8px;width:545.3px;height:2px;background:#b6b6b6"></div>
<div class="t" style="left:232px;top:353.20000000000005px;font-size:6.5px;color:#505050">Description</div>
<div class="a" style="left:776.3px;top:349.6px;width:1px;height:12.2px;background:#e3e3e3"></div>
<div class="a" style="left:777.3px;top:359.8px;width:70.90000000000009px;height:2px;background:#b6b6b6"></div>
<div class="t" style="left:778.3px;top:353.20000000000005px;font-size:6.5px;color:#505050">Context</div>
<div class="a" style="left:848.2px;top:349.6px;width:1px;height:12.2px;background:#e3e3e3"></div>
<div class="a" style="left:849.2px;top:359.8px;width:5.399999999999977px;height:2px;background:#b6b6b6"></div>
<div class="t" style="left:850.2px;top:353.20000000000005px;font-size:6.5px;color:#505050">R</div>
<div class="a" style="left:31px;top:351.2px;width:8px;height:8px;border:1px solid #a4a4a4;border-radius:1.5px;background:linear-gradient(135deg,#bdbdbd 0%,#e9e9e9 45%,#fff 100%)"></div>
<div class="a" style="left:29.4px;top:361.8px;width:13px;height:147.2px;background:#f1f1f1;border-right:1px solid #e4e4e4"></div>
<div class="a" style="left:32px;top:364.1px;width:8px;height:8px;border:1px solid #a4a4a4;border-radius:1.5px;background:linear-gradient(135deg,#bdbdbd 0%,#e9e9e9 45%,#fff 100%)"></div>
<svg width="8" height="8" style="left:46px;top:365.0px"><defs><linearGradient id="mg" x1="0" y1="0" x2="0" y2="1"><stop offset="0" stop-color="#f4f8fc"/><stop offset="1" stop-color="#a9bfdc"/></linearGradient></defs><rect x="0.4" y="0.4" width="5.6" height="5.6" rx="1.3" fill="url(#mg)" stroke="#7b95b8" stroke-width="0.7"/><rect x="1.6" y="2.8" width="3.2" height="0.9" fill="#2f4f7f"/></svg>
<svg width="10" height="9" style="left:53.4px;top:366.2px"><defs><linearGradient id="fg" x1="0" y1="0" x2="0" y2="1"><stop offset="0" stop-color="#fbe7a0"/><stop offset="1" stop-color="#e8b440"/></linearGradient></defs><path d="M0.5,1.4 L3.4,1.4 L4.2,2.3 L8.4,2.3 L8.4,7.8 L0.5,7.8 Z" fill="url(#fg)" stroke="#cf9a2a" stroke-width="0.6"/><path d="M0.5,3.4 L8.4,3.4" stroke="#f9df8a" stroke-width="0.6"/></svg>
<div class="t" style="left:81.2px;top:366.3px;font-size:6.6px;color:#444">Planning</div>
<div class="a" style="left:42.4px;top:375.9px;width:812.2px;height:14.1px;background:#f4f4f4"></div>
<div class="a" style="left:32px;top:378.2px;width:8px;height:8px;border:1px solid #a4a4a4;border-radius:1.5px;background:linear-gradient(135deg,#bdbdbd 0%,#e9e9e9 45%,#fff 100%)"></div>
<div class="a" style="left:58.4px;top:375.9px;width:1px;height:14.1px;background:#e2e2e2"></div>
<div class="a" style="left:59.4px;top:382.9px;width:3.4px;height:1px;background:#e2e2e2"></div>
<svg width="10" height="10" style="left:63.6px;top:379.2px"><rect x="0.4" y="0.4" width="8.4" height="8.4" fill="#fff" stroke="#6f8fab" stroke-width="0.8"/><rect x="0.4" y="0.4" width="8.4" height="1.8" fill="#6f8fab"/><rect x="1.6" y="5.4" width="1.8" height="3" fill="#f07c20"/><rect x="3.8" y="4" width="1.8" height="4.4" fill="#1f5a9a"/><rect x="6" y="2.8" width="1.8" height="5.6" fill="#2eb040"/></svg>
<div class="t" style="left:81.2px;top:380.09999999999997px;font-size:6.54px;color:#34568e">Project Item Status Report</div>
<svg width="10" height="10" style="left:172px;top:378.5px"><circle cx="4.6" cy="4.6" r="4" fill="url(#ig)" stroke="#7fb4e0" stroke-width="0.8"/><rect x="4" y="3.8" width="1.3" height="3.5" fill="#173e66"/><circle cx="4.65" cy="2.6" r="0.75" fill="#173e66"/></svg>
<svg width="11" height="11" style="left:192px;top:379.5px"><rect x="0.4" y="0.6" width="8.8" height="8.6" fill="#fff" stroke="#6f8fab" stroke-width="0.8"/><rect x="0.4" y="0.6" width="8.8" height="2" fill="#7f9fbb"/><rect x="1.6" y="5.6" width="1.8" height="3" fill="#f07c20"/><rect x="3.9" y="4.2" width="1.8" height="4.4" fill="#1f5a9a"/><rect x="6.2" y="3" width="1.8" height="5.6" fill="#2eb040"/></svg>
<div class="t" style="left:232.2px;top:380.09999999999997px;font-size:6.47px;color:#4e4e4e;max-width:543px;overflow:hidden">This report lists the project items associated with all projects that meet the input criteria. Project items include tasks, milestones, deliverables, activities, summary activities, and action items.</div>
<div class="t" style="left:778px;top:380.09999999999997px;font-size:6.5px;color:#4e4e4e">Site</div>
<div class="t" style="left:850.2px;top:380.09999999999997px;font-size:6.5px;color:#4e4e4e">Y</div>
<div class="a" style="left:32px;top:392.3px;width:8px;height:8px;border:1px solid #a4a4a4;border-radius:1.5px;background:linear-gradient(135deg,#bdbdbd 0%,#e9e9e9 45%,#fff 100%)"></div>
<div class="a" style="left:58.4px;top:390.0px;width:1px;height:14.1px;background:#e2e2e2"></div>
<div class="a" style="left:59.4px;top:397.0px;width:3.4px;height:1px;background:#e2e2e2"></div>
<svg width="10" height="10" style="left:63.6px;top:393.3px"><rect x="0.4" y="0.4" width="8.4" height="8.4" fill="#fff" stroke="#6f8fab" stroke-width="0.8"/><rect x="0.4" y="0.4" width="8.4" height="1.8" fill="#6f8fab"/><rect x="1.6" y="5.4" width="1.8" height="3" fill="#f07c20"/><rect x="3.8" y="4" width="1.8" height="4.4" fill="#1f5a9a"/><rect x="6" y="2.8" width="1.8" height="5.6" fill="#2eb040"/></svg>
<div class="t" style="left:81.2px;top:394.2px;font-size:6.54px;color:#34568e">Program Item Status Report</div>
<svg width="10" height="10" style="left:172px;top:392.6px"><circle cx="4.6" cy="4.6" r="4" fill="url(#ig)" stroke="#7fb4e0" stroke-width="0.8"/><rect x="4" y="3.8" width="1.3" height="3.5" fill="#173e66"/><circle cx="4.65" cy="2.6" r="0.75" fill="#173e66"/></svg>
<svg width="11" height="11" style="left:192px;top:393.6px"><rect x="0.4" y="0.6" width="8.8" height="8.6" fill="#fff" stroke="#6f8fab" stroke-width="0.8"/><rect x="0.4" y="0.6" width="8.8" height="2" fill="#7f9fbb"/><rect x="1.6" y="5.6" width="1.8" height="3" fill="#f07c20"/><rect x="3.9" y="4.2" width="1.8" height="4.4" fill="#1f5a9a"/><rect x="6.2" y="3" width="1.8" height="5.6" fill="#2eb040"/></svg>
<div class="t" style="left:232.2px;top:394.2px;font-size:6.47px;color:#4e4e4e;max-width:543px;overflow:hidden">This report lists the program items associated with all programs that meet the input criteria. Program items include tasks, milestones, deliverables, activities, summary activities, and action &#8230;</div>
<div class="t" style="left:778px;top:394.2px;font-size:6.5px;color:#4e4e4e">Site</div>
<div class="t" style="left:850.2px;top:394.2px;font-size:6.5px;color:#4e4e4e">Y</div>
<div class="a" style="left:42.4px;top:404.1px;width:812.2px;height:14.1px;background:#f4f4f4"></div>
<div class="a" style="left:32px;top:406.40000000000003px;width:8px;height:8px;border:1px solid #a4a4a4;border-radius:1.5px;background:linear-gradient(135deg,#bdbdbd 0%,#e9e9e9 45%,#fff 100%)"></div>
<div class="a" style="left:58.4px;top:404.1px;width:1px;height:14.1px;background:#e2e2e2"></div>
<div class="a" style="left:59.4px;top:411.1px;width:3.4px;height:1px;background:#e2e2e2"></div>
<svg width="10" height="10" style="left:63.6px;top:407.40000000000003px"><rect x="0.4" y="0.4" width="8.4" height="8.4" fill="#fff" stroke="#6f8fab" stroke-width="0.8"/><rect x="0.4" y="0.4" width="8.4" height="1.8" fill="#6f8fab"/><rect x="1.6" y="5.4" width="1.8" height="3" fill="#f07c20"/><rect x="3.8" y="4" width="1.8" height="4.4" fill="#1f5a9a"/><rect x="6" y="2.8" width="1.8" height="5.6" fill="#2eb040"/></svg>
<div class="t" style="left:81.2px;top:408.3px;font-size:6.54px;color:#34568e">Project Status Report</div>
<svg width="10" height="10" style="left:172px;top:406.70000000000005px"><circle cx="4.6" cy="4.6" r="4" fill="url(#ig)" stroke="#7fb4e0" stroke-width="0.8"/><rect x="4" y="3.8" width="1.3" height="3.5" fill="#173e66"/><circle cx="4.65" cy="2.6" r="0.75" fill="#173e66"/></svg>
<svg width="11" height="11" style="left:192px;top:407.70000000000005px"><rect x="0.4" y="0.6" width="8.8" height="8.6" fill="#fff" stroke="#6f8fab" stroke-width="0.8"/><rect x="0.4" y="0.6" width="8.8" height="2" fill="#7f9fbb"/><rect x="1.6" y="5.6" width="1.8" height="3" fill="#f07c20"/><rect x="3.9" y="4.2" width="1.8" height="4.4" fill="#1f5a9a"/><rect x="6.2" y="3" width="1.8" height="5.6" fill="#2eb040"/></svg>
<div class="t" style="left:232.2px;top:408.3px;font-size:6.47px;color:#4e4e4e;max-width:543px;overflow:hidden">This report will list status information for a list of projects that belong to an organization.</div>
<div class="t" style="left:778px;top:408.3px;font-size:6.5px;color:#4e4e4e">Site</div>
<div class="t" style="left:850.2px;top:408.3px;font-size:6.5px;color:#4e4e4e">Y</div>
<div class="a" style="left:32px;top:420.5px;width:8px;height:8px;border:1px solid #a4a4a4;border-radius:1.5px;background:linear-gradient(135deg,#bdbdbd 0%,#e9e9e9 45%,#fff 100%)"></div>
<div class="a" style="left:58.4px;top:418.2px;width:1px;height:14.1px;background:#e2e2e2"></div>
<div class="a" style="left:59.4px;top:425.2px;width:3.4px;height:1px;background:#e2e2e2"></div>
<svg width="10" height="10" style="left:63.6px;top:421.5px"><rect x="0.4" y="0.4" width="8.4" height="8.4" fill="#fff" stroke="#6f8fab" stroke-width="0.8"/><rect x="0.4" y="0.4" width="8.4" height="1.8" fill="#6f8fab"/><rect x="1.6" y="5.4" width="1.8" height="3" fill="#f07c20"/><rect x="3.8" y="4" width="1.8" height="4.4" fill="#1f5a9a"/><rect x="6" y="2.8" width="1.8" height="5.6" fill="#2eb040"/></svg>
<div class="t" style="left:81.2px;top:422.4px;font-size:6.54px;color:#34568e">Program Status Report</div>
<svg width="10" height="10" style="left:172px;top:420.8px"><circle cx="4.6" cy="4.6" r="4" fill="url(#ig)" stroke="#7fb4e0" stroke-width="0.8"/><rect x="4" y="3.8" width="1.3" height="3.5" fill="#173e66"/><circle cx="4.65" cy="2.6" r="0.75" fill="#173e66"/></svg>
<svg width="11" height="11" style="left:192px;top:421.8px"><rect x="0.4" y="0.6" width="8.8" height="8.6" fill="#fff" stroke="#6f8fab" stroke-width="0.8"/><rect x="0.4" y="0.6" width="8.8" height="2" fill="#7f9fbb"/><rect x="1.6" y="5.6" width="1.8" height="3" fill="#f07c20"/><rect x="3.9" y="4.2" width="1.8" height="4.4" fill="#1f5a9a"/><rect x="6.2" y="3" width="1.8" height="5.6" fill="#2eb040"/></svg>
<div class="t" style="left:232.2px;top:422.4px;font-size:6.47px;color:#4e4e4e;max-width:543px;overflow:hidden">This report will list status information for a list of programs that belong to an organization.</div>
<div class="t" style="left:778px;top:422.4px;font-size:6.5px;color:#4e4e4e">Site</div>
<div class="t" style="left:850.2px;top:422.4px;font-size:6.5px;color:#4e4e4e">Y</div>
<div class="a" style="left:42.4px;top:432.3px;width:812.2px;height:14.1px;background:#f4f4f4"></div>
<div class="a" style="left:32px;top:434.6px;width:8px;height:8px;border:1px solid #a4a4a4;border-radius:1.5px;background:linear-gradient(135deg,#bdbdbd 0%,#e9e9e9 45%,#fff 100%)"></div>
<div class="a" style="left:58.4px;top:432.3px;width:1px;height:14.1px;background:#e2e2e2"></div>
<div class="a" style="left:59.4px;top:439.3px;width:3.4px;height:1px;background:#e2e2e2"></div>
<svg width="10" height="10" style="left:63.6px;top:435.6px"><rect x="0.4" y="0.4" width="8.4" height="8.4" fill="#fff" stroke="#6f8fab" stroke-width="0.8"/><rect x="0.4" y="0.4" width="8.4" height="1.8" fill="#6f8fab"/><rect x="1.6" y="5.4" width="1.8" height="3" fill="#f07c20"/><rect x="3.8" y="4" width="1.8" height="4.4" fill="#1f5a9a"/><rect x="6" y="2.8" width="1.8" height="5.6" fill="#2eb040"/></svg>
<div class="t" style="left:81.2px;top:436.5px;font-size:6.54px;color:#34568e">My Open Work</div>
<svg width="10" height="10" style="left:172px;top:434.90000000000003px"><circle cx="4.6" cy="4.6" r="4" fill="url(#ig)" stroke="#7fb4e0" stroke-width="0.8"/><rect x="4" y="3.8" width="1.3" height="3.5" fill="#173e66"/><circle cx="4.65" cy="2.6" r="0.75" fill="#173e66"/></svg>
<svg width="11" height="11" style="left:192px;top:435.90000000000003px"><rect x="0.4" y="0.6" width="8.8" height="8.6" fill="#fff" stroke="#6f8fab" stroke-width="0.8"/><rect x="0.4" y="0.6" width="8.8" height="2" fill="#7f9fbb"/><rect x="1.6" y="5.6" width="1.8" height="3" fill="#f07c20"/><rect x="3.9" y="4.2" width="1.8" height="4.4" fill="#1f5a9a"/><rect x="6.2" y="3" width="1.8" height="5.6" fill="#2eb040"/></svg>
<div class="t" style="left:232.2px;top:436.5px;font-size:6.47px;color:#4e4e4e;max-width:543px;overflow:hidden">Displays all your project activities, deliverables, milestones, work items, and action items which are not completed (less than 100% done or not resolved).</div>
<div class="t" style="left:778px;top:436.5px;font-size:6.5px;color:#4e4e4e">Site</div>
<div class="t" style="left:850.2px;top:436.5px;font-size:6.5px;color:#4e4e4e">Y</div>
<div class="a" style="left:32px;top:448.7px;width:8px;height:8px;border:1px solid #a4a4a4;border-radius:1.5px;background:linear-gradient(135deg,#bdbdbd 0%,#e9e9e9 45%,#fff 100%)"></div>
<div class="a" style="left:58.4px;top:446.4px;width:1px;height:14.1px;background:#e2e2e2"></div>
<div class="a" style="left:59.4px;top:453.4px;width:3.4px;height:1px;background:#e2e2e2"></div>
<svg width="10" height="10" style="left:63.6px;top:449.7px"><rect x="0.4" y="0.4" width="8.4" height="8.4" fill="#fff" stroke="#6f8fab" stroke-width="0.8"/><rect x="0.4" y="0.4" width="8.4" height="1.8" fill="#6f8fab"/><rect x="1.6" y="5.4" width="1.8" height="3" fill="#f07c20"/><rect x="3.8" y="4" width="1.8" height="4.4" fill="#1f5a9a"/><rect x="6" y="2.8" width="1.8" height="5.6" fill="#2eb040"/></svg>
<div class="t" style="left:81.2px;top:450.59999999999997px;font-size:6.54px;color:#34568e">My Closed Work</div>
<svg width="10" height="10" style="left:172px;top:449.0px"><circle cx="4.6" cy="4.6" r="4" fill="url(#ig)" stroke="#7fb4e0" stroke-width="0.8"/><rect x="4" y="3.8" width="1.3" height="3.5" fill="#173e66"/><circle cx="4.65" cy="2.6" r="0.75" fill="#173e66"/></svg>
<svg width="11" height="11" style="left:192px;top:450.0px"><rect x="0.4" y="0.6" width="8.8" height="8.6" fill="#fff" stroke="#6f8fab" stroke-width="0.8"/><rect x="0.4" y="0.6" width="8.8" height="2" fill="#7f9fbb"/><rect x="1.6" y="5.6" width="1.8" height="3" fill="#f07c20"/><rect x="3.9" y="4.2" width="1.8" height="4.4" fill="#1f5a9a"/><rect x="6.2" y="3" width="1.8" height="5.6" fill="#2eb040"/></svg>
<div class="t" style="left:232.2px;top:450.59999999999997px;font-size:6.47px;color:#4e4e4e;max-width:543px;overflow:hidden">Displays all your completed (100% done) project activities, deliverables, milestones, and action items.</div>
<div class="t" style="left:778px;top:450.59999999999997px;font-size:6.5px;color:#4e4e4e">Site</div>
<div class="t" style="left:850.2px;top:450.59999999999997px;font-size:6.5px;color:#4e4e4e">Y</div>
<div class="a" style="left:42.4px;top:460.5px;width:812.2px;height:14.1px;background:#f4f4f4"></div>
<div class="a" style="left:32px;top:462.8px;width:8px;height:8px;border:1px solid #a4a4a4;border-radius:1.5px;background:linear-gradient(135deg,#bdbdbd 0%,#e9e9e9 45%,#fff 100%)"></div>
<div class="a" style="left:58.4px;top:460.5px;width:1px;height:14.1px;background:#e2e2e2"></div>
<div class="a" style="left:59.4px;top:467.5px;width:3.4px;height:1px;background:#e2e2e2"></div>
<svg width="10" height="10" style="left:63.6px;top:463.8px"><rect x="0.4" y="0.4" width="8.4" height="8.4" fill="#fff" stroke="#6f8fab" stroke-width="0.8"/><rect x="0.4" y="0.4" width="8.4" height="1.8" fill="#6f8fab"/><rect x="1.6" y="5.4" width="1.8" height="3" fill="#f07c20"/><rect x="3.8" y="4" width="1.8" height="4.4" fill="#1f5a9a"/><rect x="6" y="2.8" width="1.8" height="5.6" fill="#2eb040"/></svg>
<div class="t" style="left:81.2px;top:464.7px;font-size:6.54px;color:#34568e">My At Risk Work</div>
<svg width="10" height="10" style="left:172px;top:463.1px"><circle cx="4.6" cy="4.6" r="4" fill="url(#ig)" stroke="#7fb4e0" stroke-width="0.8"/><rect x="4" y="3.8" width="1.3" height="3.5" fill="#173e66"/><circle cx="4.65" cy="2.6" r="0.75" fill="#173e66"/></svg>
<svg width="11" height="11" style="left:192px;top:464.1px"><rect x="0.4" y="0.6" width="8.8" height="8.6" fill="#fff" stroke="#6f8fab" stroke-width="0.8"/><rect x="0.4" y="0.6" width="8.8" height="2" fill="#7f9fbb"/><rect x="1.6" y="5.6" width="1.8" height="3" fill="#f07c20"/><rect x="3.9" y="4.2" width="1.8" height="4.4" fill="#1f5a9a"/><rect x="6.2" y="3" width="1.8" height="5.6" fill="#2eb040"/></svg>
<div class="t" style="left:232.2px;top:464.7px;font-size:6.47px;color:#4e4e4e;max-width:543px;overflow:hidden">Displays all your project activities, deliverables, and milestones with a red or yellow health status or a high or very high risk.</div>
<div class="t" style="left:778px;top:464.7px;font-size:6.5px;color:#4e4e4e">Site</div>
<div class="t" style="left:850.2px;top:464.7px;font-size:6.5px;color:#4e4e4e">Y</div>
<div class="a" style="left:32px;top:476.90000000000003px;width:8px;height:8px;border:1px solid #a4a4a4;border-radius:1.5px;background:linear-gradient(135deg,#bdbdbd 0%,#e9e9e9 45%,#fff 100%)"></div>
<div class="a" style="left:58.4px;top:474.6px;width:1px;height:14.1px;background:#e2e2e2"></div>
<div class="a" style="left:59.4px;top:481.6px;width:3.4px;height:1px;background:#e2e2e2"></div>
<svg width="10" height="10" style="left:63.6px;top:477.90000000000003px"><rect x="0.4" y="0.4" width="8.4" height="8.4" fill="#fff" stroke="#6f8fab" stroke-width="0.8"/><rect x="0.4" y="0.4" width="8.4" height="1.8" fill="#6f8fab"/><rect x="1.6" y="5.4" width="1.8" height="3" fill="#f07c20"/><rect x="3.8" y="4" width="1.8" height="4.4" fill="#1f5a9a"/><rect x="6" y="2.8" width="1.8" height="5.6" fill="#2eb040"/></svg>
<div class="t" style="left:81.2px;top:478.8px;font-size:6.54px;color:#34568e">My Overdue Work</div>
<svg width="10" height="10" style="left:172px;top:477.20000000000005px"><circle cx="4.6" cy="4.6" r="4" fill="url(#ig)" stroke="#7fb4e0" stroke-width="0.8"/><rect x="4" y="3.8" width="1.3" height="3.5" fill="#173e66"/><circle cx="4.65" cy="2.6" r="0.75" fill="#173e66"/></svg>
<svg width="11" height="11" style="left:192px;top:478.20000000000005px"><rect x="0.4" y="0.6" width="8.8" height="8.6" fill="#fff" stroke="#6f8fab" stroke-width="0.8"/><rect x="0.4" y="0.6" width="8.8" height="2" fill="#7f9fbb"/><rect x="1.6" y="5.6" width="1.8" height="3" fill="#f07c20"/><rect x="3.9" y="4.2" width="1.8" height="4.4" fill="#1f5a9a"/><rect x="6.2" y="3" width="1.8" height="5.6" fill="#2eb040"/></svg>
<div class="t" style="left:232.2px;top:478.8px;font-size:6.47px;color:#4e4e4e;max-width:543px;overflow:hidden">Displays all your project activities, deliverables, milestones, and action items for which the due date or deadline has passed.</div>
<div class="t" style="left:778px;top:478.8px;font-size:6.5px;color:#4e4e4e">Site</div>
<div class="t" style="left:850.2px;top:478.8px;font-size:6.5px;color:#4e4e4e">Y</div>
<div class="a" style="left:42.4px;top:488.7px;width:812.2px;height:14.1px;background:#f4f4f4"></div>
<div class="a" style="left:32px;top:491.0px;width:8px;height:8px;border:1px solid #a4a4a4;border-radius:1.5px;background:linear-gradient(135deg,#bdbdbd 0%,#e9e9e9 45%,#fff 100%)"></div>
<div class="a" style="left:58.4px;top:488.7px;width:1px;height:14.1px;background:#e2e2e2"></div>
<div class="a" style="left:59.4px;top:495.7px;width:3.4px;height:1px;background:#e2e2e2"></div>
<svg width="10" height="10" style="left:63.6px;top:492.0px"><rect x="0.4" y="0.4" width="8.4" height="8.4" fill="#fff" stroke="#6f8fab" stroke-width="0.8"/><rect x="0.4" y="0.4" width="8.4" height="1.8" fill="#6f8fab"/><rect x="1.6" y="5.4" width="1.8" height="3" fill="#f07c20"/><rect x="3.8" y="4" width="1.8" height="4.4" fill="#1f5a9a"/><rect x="6" y="2.8" width="1.8" height="5.6" fill="#2eb040"/></svg>
<div class="t" style="left:81.2px;top:492.9px;font-size:6.54px;color:#34568e">My Work Not Started</div>
<svg width="10" height="10" style="left:172px;top:491.3px"><circle cx="4.6" cy="4.6" r="4" fill="url(#ig)" stroke="#7fb4e0" stroke-width="0.8"/><rect x="4" y="3.8" width="1.3" height="3.5" fill="#173e66"/><circle cx="4.65" cy="2.6" r="0.75" fill="#173e66"/></svg>
<svg width="11" height="11" style="left:192px;top:492.3px"><rect x="0.4" y="0.6" width="8.8" height="8.6" fill="#fff" stroke="#6f8fab" stroke-width="0.8"/><rect x="0.4" y="0.6" width="8.8" height="2" fill="#7f9fbb"/><rect x="1.6" y="5.6" width="1.8" height="3" fill="#f07c20"/><rect x="3.9" y="4.2" width="1.8" height="4.4" fill="#1f5a9a"/><rect x="6.2" y="3" width="1.8" height="5.6" fill="#2eb040"/></svg>
<div class="t" style="left:232.2px;top:492.9px;font-size:6.47px;color:#4e4e4e;max-width:543px;overflow:hidden">Displays all your project activities, deliverables, and milestones for which no effort has been entered or which have a 0% done value.</div>
<div class="t" style="left:778px;top:492.9px;font-size:6.5px;color:#4e4e4e">Site</div>
<div class="t" style="left:850.2px;top:492.9px;font-size:6.5px;color:#4e4e4e">Y</div>
<div class="a" style="left:32px;top:505.1px;width:8px;height:8px;border:1px solid #a4a4a4;border-radius:1.5px;background:linear-gradient(135deg,#bdbdbd 0%,#e9e9e9 45%,#fff 100%)"></div>
<div class="a" style="left:58.4px;top:502.8px;width:1px;height:14.1px;background:#e2e2e2"></div>
<div class="a" style="left:59.4px;top:509.8px;width:3.4px;height:1px;background:#e2e2e2"></div>
<svg width="10" height="10" style="left:63.6px;top:506.1px"><rect x="0.4" y="0.4" width="8.4" height="8.4" fill="#fff" stroke="#6f8fab" stroke-width="0.8"/><rect x="0.4" y="0.4" width="8.4" height="1.8" fill="#6f8fab"/><rect x="1.6" y="5.4" width="1.8" height="3" fill="#f07c20"/><rect x="3.8" y="4" width="1.8" height="4.4" fill="#1f5a9a"/><rect x="6" y="2.8" width="1.8" height="5.6" fill="#2eb040"/></svg>
<div class="t" style="left:81.2px;top:507.0px;font-size:6.54px;color:#34568e">My Change Log</div>
<svg width="10" height="10" style="left:172px;top:505.40000000000003px"><circle cx="4.6" cy="4.6" r="4" fill="url(#ig)" stroke="#7fb4e0" stroke-width="0.8"/><rect x="4" y="3.8" width="1.3" height="3.5" fill="#173e66"/><circle cx="4.65" cy="2.6" r="0.75" fill="#173e66"/></svg>
<svg width="11" height="11" style="left:192px;top:506.40000000000003px"><rect x="0.4" y="0.6" width="8.8" height="8.6" fill="#fff" stroke="#6f8fab" stroke-width="0.8"/><rect x="0.4" y="0.6" width="8.8" height="2" fill="#7f9fbb"/><rect x="1.6" y="5.6" width="1.8" height="3" fill="#f07c20"/><rect x="3.9" y="4.2" width="1.8" height="4.4" fill="#1f5a9a"/><rect x="6.2" y="3" width="1.8" height="5.6" fill="#2eb040"/></svg>
<div class="t" style="left:232.2px;top:507.0px;font-size:6.47px;color:#4e4e4e;max-width:543px;overflow:hidden">Displays a chronological history of changes you made to all projects. The history includes a record of each addition, update action you made since the projects were started.</div>
<div class="t" style="left:778px;top:507.0px;font-size:6.5px;color:#4e4e4e">Site</div>
<div class="t" style="left:850.2px;top:507.0px;font-size:6.5px;color:#4e4e4e">Y</div>
<div class="a" style="left:854.6px;top:333px;width:5.4px;height:176px;background:#fff"></div>
</body></html>
